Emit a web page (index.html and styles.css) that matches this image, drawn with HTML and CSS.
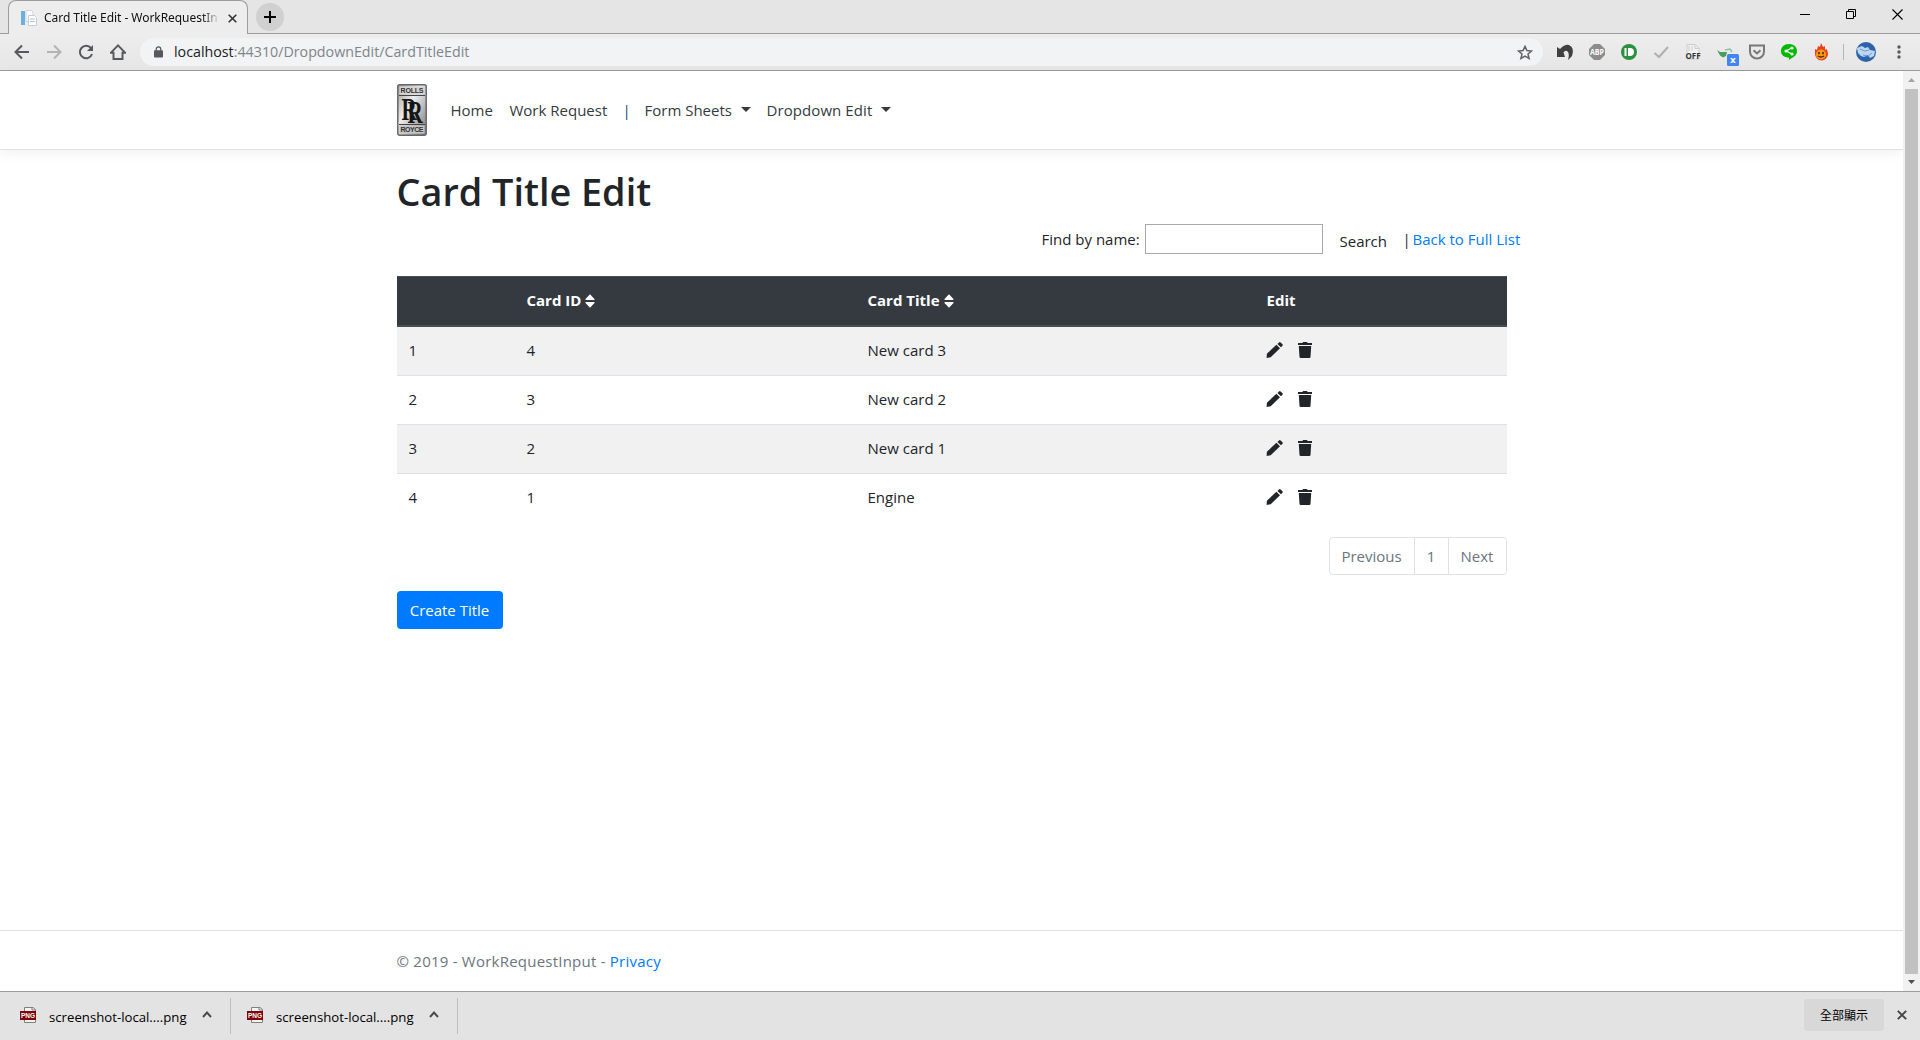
FILE: index.html
```
<!DOCTYPE html>
<html lang="en">
<head>
<meta charset="utf-8">
<title>Card Title Edit - WorkRequestInput</title>
<link rel="stylesheet" href="styles.css">
</head>
<body>
<svg class="defs" width="0" height="0">
  <defs>
    <symbol id="pencil" viewBox="0 0 18 16"><path d="M.6 15.900 L.9 11.700 L10.400 2.800 L14 6.200 L4.700 15.300 Z M11.400 1.900 L13 .4 Q13.800-.2 14.600.4 L16.500 2.300 Q17 3 16.500 3.700 L15 5.300 Z"/></symbol>
    <symbol id="trash" viewBox="0 0 14 16"><path d="M0 1h4.200l1-1h3.600l1 1H14v2H0z M.8 4h12.400L12.500 15q-.2 1-1.200 1H2.700q-1 0-1.200-1z"/></symbol>
    <symbol id="sort" viewBox="0 0 10 14"><path d="M5 0.300 L9.500 5 Q9.900 6 9 6 H1 Q.1 6 .5 5 Z M5 13.700 L.5 9 Q.1 8 1 8 H9 Q9.900 8 9.500 9 Z"/></symbol>
  </defs>
</svg>
<div class="tabstrip">
  <div class="tab">
    <svg class="favicon" width="16" height="16" viewBox="0 0 16 16"><rect x="0" y="1" width="4" height="14" fill="#6aafe0"/><path d="M5 .5h6l1 2v9H5z" fill="#f8fafc" stroke="#cbd5df"/><path d="M7.500 5.500h6l2 2v8h-8z" fill="#fff" stroke="#c5ccd4"/><path d="M9 9h5M9 11.500h5" stroke="#b5c1d0"/></svg>
    <span class="tab-title">Card Title Edit - WorkRequestIn</span>
    <svg width="9" height="9" viewBox="0 0 9 9"><path d="M.7.7l7.600 7.600M8.300.7L.7 8.300" stroke="#333" stroke-width="1.600"/></svg>
  </div>
  <div class="new-tab"><svg width="12" height="12" viewBox="0 0 12 12"><path d="M6 0v12M0 6h12" stroke="#000" stroke-width="2"/></svg></div>
  <div class="window-controls">
    <svg width="10" height="10" viewBox="0 0 10 10"><path d="M0 5.500h10" stroke="#000"/></svg>
    <svg width="10" height="10" viewBox="0 0 10 10"><path d="M.5 2.500h7v7h-7zM2.500 2.500V.5h7v7h-2" fill="none" stroke="#000"/></svg>
    <svg width="11" height="11" viewBox="0 0 11 11"><path d="M.5.500l10 10M10.500.5l-10 10" stroke="#000" stroke-width="1.100"/></svg>
  </div>
</div>
<div class="toolbar">
  <div class="nav-buttons">
    <svg width="16" height="16" viewBox="0 0 16 16"><path d="M15 8H2M8 1.500L1.500 8L8 14.500" fill="none" stroke="#55585c" stroke-width="2"/></svg>
    <svg width="16" height="16" viewBox="0 0 16 16"><path d="M1 8h13M8 1.500L14.500 8L8 14.500" fill="none" stroke="#b2b3b5" stroke-width="2"/></svg>
    <svg width="16" height="16" viewBox="0 0 16 16"><path d="M13 4.200A6.200 6.200 0 1 0 14 10" fill="none" stroke="#55585c" stroke-width="2"/><path d="M15 1v6H9z" fill="#55585c"/></svg>
    <svg width="16" height="16" viewBox="0 0 16 16"><path d="M1 8.700L8 1.400l7 7.300H12.500V15H3.500V8.700z" fill="none" stroke="#55585c" stroke-width="1.900"/></svg>
  </div>
  <div class="omnibox">
    <svg width="9" height="12" viewBox="0 0 10 13"><rect x="0" y="4.500" width="10" height="8" rx="1" fill="#55585c"/><path d="M2.500 5V3.300a2.500 2.500 0 0 1 5 0V5" fill="none" stroke="#55585c" stroke-width="1.400"/></svg>
    <span class="url"><b>localhost</b>:44310/DropdownEdit/CardTitleEdit</span>
    <svg class="star" width="16" height="15" viewBox="0 0 16 15"><path d="M8 1.400l1.900 4.200 4.600.4-3.500 3 1.100 4.500L8 11.100l-4.100 2.400L5 9 1.500 6l4.600-.4z" fill="none" stroke="#5f6368" stroke-width="1.500"/></svg>
  </div>
  <div class="extensions">
    <svg viewBox="0 0 20 20"><path d="M2 5l3 2Q10 2 14 3Q20 6 17 14l-4 4Q15 11 12 9Q10 8 8.500 10.500l1.500 4.500H2z" fill="#404040"/></svg>
    <svg viewBox="0 0 20 20"><path d="M7 2h6l5 5v6l-5 5H7l-5-5V7z" fill="#8c8c8c"/><text x="10" y="13" text-anchor="middle" textLength="14" lengthAdjust="spacingAndGlyphs" class="abp">ABP</text></svg>
    <svg viewBox="0 0 20 20"><circle cx="10" cy="10" r="8" fill="#2b9141"/><path d="M6.500 6v8M10 7h1a3 3 0 0 1 0 6H10z" fill="#fff" stroke="#fff" stroke-width="2"/></svg>
    <svg viewBox="0 0 20 20"><path d="M3.500 11l4.500 4 9-10" fill="none" stroke="#b0b0b0" stroke-width="2"/></svg>
    <svg viewBox="0 0 20 20"><path d="M4 2.500h8l4 4V17H4z" fill="#f2f2f2" stroke="#ccc"/><path d="M12 2.500v4h4M6 4v5M9 4v5" fill="none" stroke="#ccc"/><text x="10" y="17" text-anchor="middle" class="off">OFF</text></svg>
    <svg viewBox="0 0 20 20" overflow="visible"><path d="M2 8l3 2h7l-1 4-3 1.500-3-2z" fill="#4c9d60"/><path d="M10 8l5-1 2 3" fill="none" stroke="#8cc798" stroke-width="1.500"/><rect x="12" y="12" width="12" height="12" rx="1.500" fill="#4285f4"/><text x="18" y="21" text-anchor="middle" class="xb">x</text></svg>
    <svg viewBox="0 0 20 20"><path d="M3 3.500h14v6a7 7 0 0 1-14 0z" fill="none" stroke="#787878" stroke-width="2"/><path d="M6.500 8.200l3.500 3.300 3.500-3.300" fill="none" stroke="#787878" stroke-width="2"/></svg>
    <svg viewBox="0 0 20 20"><path d="M10 2c5 0 8 3 8 7 0 5-4 6-8 9v-2.500C5 15.500 2 13 2 9s3-7 8-7z" fill="#00b900"/><path d="M13 5.800L7 9l6 3" fill="none" stroke="#fff" stroke-width="1.200"/><g fill="#fff"><circle cx="13" cy="6" r="1.600"/><circle cx="7" cy="9" r="1.600"/><circle cx="13" cy="12" r="1.600"/></g></svg>
    <svg viewBox="0 0 20 20"><path d="M4 12L4 7l2 1 1-4 2 1 1-4 2 4 2-1 0 4 2-1 1 5a6 6 0 0 1-13 0z" fill="#e8401a"/><circle cx="10" cy="12.500" r="5" fill="#f49a1c"/><path d="M8 10v2.200M12 10v2.200M7 14q3 2 6 0" fill="none" stroke="#542000" stroke-width="1.500"/></svg>
  </div>
  <div class="rule"></div>
  <svg class="avatar" width="20" height="20" viewBox="0 0 20 20"><circle cx="10" cy="10" r="10" fill="#2d63aa"/><path d="M1 6l5-2 3 2 3-1 2 3 5 1-1 5-4 2-2-3-4 2-3-1-3-3z" fill="#bcd7ef"/><path d="M4 7l5 2 4-1M7 13l5 1 4-3" stroke="#6c9ccc" fill="none"/></svg>
  <svg width="4" height="14" viewBox="0 0 4 14"><g fill="#55585c"><circle cx="2" cy="2" r="1.700"/><circle cx="2" cy="7" r="1.700"/><circle cx="2" cy="12" r="1.700"/></g></svg>
</div>
<div class="viewport">
  <div class="page">
    <header class="site-header">
      <nav class="container navbar">
        <svg class="logo" width="30" height="52" viewBox="0 0 30 52">
          <defs><linearGradient id="silver" x1="0" y1="0" x2="1" y2="1"><stop offset="0" stop-color="#999"/><stop offset=".4" stop-color="#eee"/><stop offset="1" stop-color="#777"/></linearGradient></defs>
          <rect x=".8" y=".8" width="28.400" height="50.400" rx="2" fill="url(#silver)" stroke="#666" stroke-width="1.500"/>
          <path d="M2 11.500h26M2 40.500h26" stroke="#444" stroke-width="1.200"/>
          <rect x="2.500" y="2.500" width="25" height="8" fill="#d4d4d4"/><rect x="2.500" y="41.500" width="25" height="8" fill="#c5c5c5"/>
          <text x="15" y="9" text-anchor="middle" textLength="23" class="plate">ROLLS</text>
          <text transform="translate(4.500 36) scale(.66 1)" dy="0 2.500" class="monogram">RR</text>
          <text x="15" y="48.200" text-anchor="middle" textLength="23" class="plate">ROYCE</text>
        </svg>
        <a class="n-home">Home</a><a class="n-work">Work Request</a><span class="n-bar">|</span><a class="n-form">Form Sheets<i class="caret"></i></a><a class="n-drop">Dropdown Edit<i class="caret"></i></a>
      </nav>
    </header>
    <main class="container">
      <h1>Card Title Edit</h1>
      <div class="search">
        <label for="q">Find by name:</label><input id="q" type="text"><button class="find">Search</button><span class="sep">|</span><a class="link">Back to Full List</a>
      </div>
      <table>
        <colgroup><col class="c1"><col class="c2"><col class="c3"><col></colgroup>
        <thead><tr><th></th><th>Card ID<svg class="sort" width="10" height="14"><use href="#sort"/></svg></th><th>Card Title<svg class="sort" width="10" height="14"><use href="#sort"/></svg></th><th>Edit</th></tr></thead>
        <tbody>
          <tr><td>1</td><td>4</td><td>New card 3</td><td><span class="actions"><svg width="18" height="16"><use href="#pencil"/></svg><svg width="14" height="16"><use href="#trash"/></svg></span></td></tr>
          <tr><td>2</td><td>3</td><td>New card 2</td><td><span class="actions"><svg width="18" height="16"><use href="#pencil"/></svg><svg width="14" height="16"><use href="#trash"/></svg></span></td></tr>
          <tr><td>3</td><td>2</td><td>New card 1</td><td><span class="actions"><svg width="18" height="16"><use href="#pencil"/></svg><svg width="14" height="16"><use href="#trash"/></svg></span></td></tr>
          <tr><td>4</td><td>1</td><td>Engine</td><td><span class="actions"><svg width="18" height="16"><use href="#pencil"/></svg><svg width="14" height="16"><use href="#trash"/></svg></span></td></tr>
        </tbody>
      </table>
      <div class="pagination"><span class="prev">Previous</span><span class="num">1</span><span class="next">Next</span></div>
      <button class="create">Create Title</button>
    </main>
    <footer><div class="container"><span class="copy">© 2019 - WorkRequestInput - <a class="link">Privacy</a></span></div></footer>
  </div>
  <div class="scrollbar">
    <svg width="7" height="4"><path d="M0 4L3.500 0L7 4z" fill="#a3a3a3"/></svg>
    <div class="thumb"></div>
    <svg width="7" height="4"><path d="M0 0h7L3.500 4z" fill="#505050"/></svg>
  </div>
</div>
<div class="downloads">
  <div class="download"><svg width="16" height="16" viewBox="0 0 16 16"><path d="M4.500.500H13L15.500 2.500V15.500H4.500z" fill="#f5f5f5" stroke="#808080"/><path d="M12 .500v2.500h3.500" fill="none" stroke="#808080"/><rect y="4" width="16" height="9" fill="#800000"/><text x="8" y="11" text-anchor="middle" textLength="14" lengthAdjust="spacingAndGlyphs" class="png">PNG</text></svg><span>screenshot-local....png</span><svg width="10" height="7" viewBox="0 0 10 7"><path d="M1 6l4-4.500L9 6" fill="none" stroke="#4a4a4a" stroke-width="1.900"/></svg></div>
  <div class="download second"><svg width="16" height="16" viewBox="0 0 16 16"><path d="M4.500.500H13L15.500 2.500V15.500H4.500z" fill="#f5f5f5" stroke="#808080"/><path d="M12 .500v2.500h3.500" fill="none" stroke="#808080"/><rect y="4" width="16" height="9" fill="#800000"/><text x="8" y="11" text-anchor="middle" textLength="14" lengthAdjust="spacingAndGlyphs" class="png">PNG</text></svg><span>screenshot-local....png</span><svg width="10" height="7" viewBox="0 0 10 7"><path d="M1 6l4-4.500L9 6" fill="none" stroke="#4a4a4a" stroke-width="1.900"/></svg></div>
  <button class="show-all">全部顯示</button>
  <svg class="dismiss" width="10" height="10" viewBox="0 0 10 10"><path d="M.8.8l8.400 8.400M9.200.8L.8 9.200" stroke="#444" stroke-width="1.900"/></svg>
</div>
</body>
</html>
```
FILE: styles.css
```
* { box-sizing: border-box; }
body {
  margin: 0; width: 1920px; height: 1040px; overflow: hidden;
  display: flex; flex-direction: column;
  font: 15px/24px "Open Sans", "Noto Sans", sans-serif;
  color: #212529; background: #fff;
}
svg { display: block; flex: none; }
.defs { position: absolute; }
button { font: inherit; color: inherit; border: 0; background: none; padding: 0; }

/* browser frame */
.tabstrip { height: 34px; flex: none; display: flex; background: #e5e5e5; border-bottom: 1px solid #9c9c9c; padding-left: 8px; }
.tab { width: 240px; height: 34px; display: flex; align-items: center; padding: 1px 10px 0 12px; background: #ededed; border: 1px solid #9c9c9c; border-bottom: 0; border-radius: 8px 8px 0 0; }
.tab-title { width: 176px; margin: 0 8px 0 7px; white-space: nowrap; font: 12px/18px "Noto Sans", sans-serif; letter-spacing: -0.05px; color: #111; -webkit-mask-image: linear-gradient(90deg, #000 158px, transparent 176px); }
.new-tab { width: 28px; height: 28px; margin: 3px 0 0 8px; border-radius: 50%; background: #d0d0d0; display: grid; place-items: center; }
.window-controls { margin-left: auto; display: flex; gap: 36px; padding: 9px 17px 0 0; }
.toolbar { height: 37px; flex: none; display: flex; align-items: center; background: linear-gradient(#ededed, #e6e6e6); border-bottom: 1px solid #9c9c9c; }
.nav-buttons { display: flex; gap: 16px; padding-left: 14px; width: 140px; }
.omnibox { width: 1403px; height: 28px; border-radius: 14px; background: #f1f3f4; display: flex; align-items: center; padding: 0 10px 0 14px; }
.url { margin-left: 11px; font: 14.25px/20px "Open Sans", sans-serif; color: #80858a; white-space: nowrap; }
.url b { font-weight: 400; color: #202124; }
.star { margin-left: auto; }
.extensions { display: flex; gap: 12px; margin-left: 12px; }
.extensions svg { width: 20px; height: 20px; }
.abp { font: bold 8px "Open Sans", sans-serif; fill: #fff; }
.off { font: bold 8px "Open Sans", sans-serif; fill: #333; }
.xb { font: bold 9px "DejaVu Sans", sans-serif; fill: #fff; }
.png { font: bold 7px "Liberation Sans", sans-serif; fill: #fff; }
.rule { width: 1px; height: 16px; margin: 0 12px; background: #b5b5b5; }
.avatar { margin-right: 21px; }
.viewport { height: 920px; flex: none; display: flex; }
.page { width: 1903px; display: flex; flex-direction: column; }
.scrollbar { width: 17px; background: #f1f1f1; display: flex; flex-direction: column; align-items: center; justify-content: space-between; padding: 7px 0; }
.thumb { width: 13px; height: 885px; background: #c1c1c1; }

/* page */
.container { width: 1110px; margin: 0 auto; }
.site-header { height: 79px; flex: none; border-bottom: 1px solid #dee2e6; box-shadow: 0 4px 12px rgba(0,0,0,.05); }
.navbar { display: flex; align-items: center; height: 78px; color: #343a40; white-space: nowrap; }
.logo { margin-right: 24px; }
.plate { font: bold 7px "Liberation Sans", sans-serif; fill: #333; }
.monogram { font: bold 32px "Liberation Serif", serif; letter-spacing: -14px; fill: #161616; }
.n-home { width: 59px; }
.n-work { width: 113px; }
.n-bar { width: 22px; color: #064c80; }
.n-form { width: 122px; }
.n-drop { letter-spacing: .08px; }
.caret { display: inline-block; margin-left: 9px; vertical-align: 4px; border: 5px solid transparent; border-top-color: #343a40; border-bottom: 0; }
h1 { margin: 18px 0 8px; font-size: 37.8px; line-height: 48px; font-weight: 600; white-space: nowrap; }
.search { height: 30px; display: flex; align-items: center; margin-left: 645px; width: 500px; white-space: nowrap; }
.search label { width: 103px; }
.search input { width: 178px; height: 30px; border: 1px solid #a9a9a9; }
.find { width: 49px; margin: 4px 0 0 17px; text-align: left; }
.sep { width: 10px; margin-left: 14px; }
.link { color: #007bff; }
table { width: 1110px; table-layout: fixed; border-collapse: separate; border-spacing: 0; margin-top: 22px; }
.c1 { width: 118px; }
.c2 { width: 341px; }
.c3 { width: 399px; }
th, td { text-align: left; padding: 11px 12px 13px; height: 49px; line-height: 24px; border-top: 1px solid #dee2e6; }
th { height: 51px; padding: 11px 12px 13px; background: #343a40; color: #fff; font-weight: 700; border-top: 1px solid #454d55; border-bottom: 2px solid #454d55; }
tbody tr:nth-child(odd) { background: #f1f1f1; }
tbody tr:first-child td { height: 48px; border-top: 0; }
.sort { display: inline-block; margin-left: 4px; vertical-align: -2px; fill: #fff; }
.actions { display: flex; align-items: center; gap: 14px; height: 24px; margin-left: -1px; fill: #212529; }
.pagination { display: flex; width: 178px; height: 38px; margin: 15px 0 16px auto; border: 1px solid #dee2e6; border-radius: 4px; color: #6c757d; line-height: 36px; text-align: center; }
.prev { width: 84px; }
.num { width: 35px; border: solid #dee2e6; border-width: 0 1px; }
.next { flex: 1; }
.create { width: 106px; height: 38px; background: #007bff; border-radius: 4px; color: #fff; }
footer { margin-top: auto; height: 61px; flex: none; border-top: 1px solid #dee2e6; line-height: 60px; color: #6c757d; white-space: nowrap; }
.copy { letter-spacing: .23px; }

/* downloads bar */
.downloads { height: 49px; flex: none; display: flex; align-items: center; background: #e3e3e3; border-top: 1px solid #9c9c9c; padding-right: 13px; }
.download { width: 231px; height: 36px; display: flex; align-items: center; border-right: 1px solid #bdbdbd; padding-left: 20px; }
.second { width: 227px; padding-left: 16px; }
.download svg { margin-bottom: 3px; }
.download span { width: 140px; margin: 2px 13px 0 13px; font: 13.2px/20px "Open Sans", sans-serif; color: #000; white-space: nowrap; }
.show-all { margin: -3px 13px 0 auto; width: 80px; height: 32px; background: #d8d8d8; border-radius: 3px; font: 12px/30px "Noto Sans CJK TC", sans-serif; color: #000; }
.dismiss { margin-top: -2px; }
```
